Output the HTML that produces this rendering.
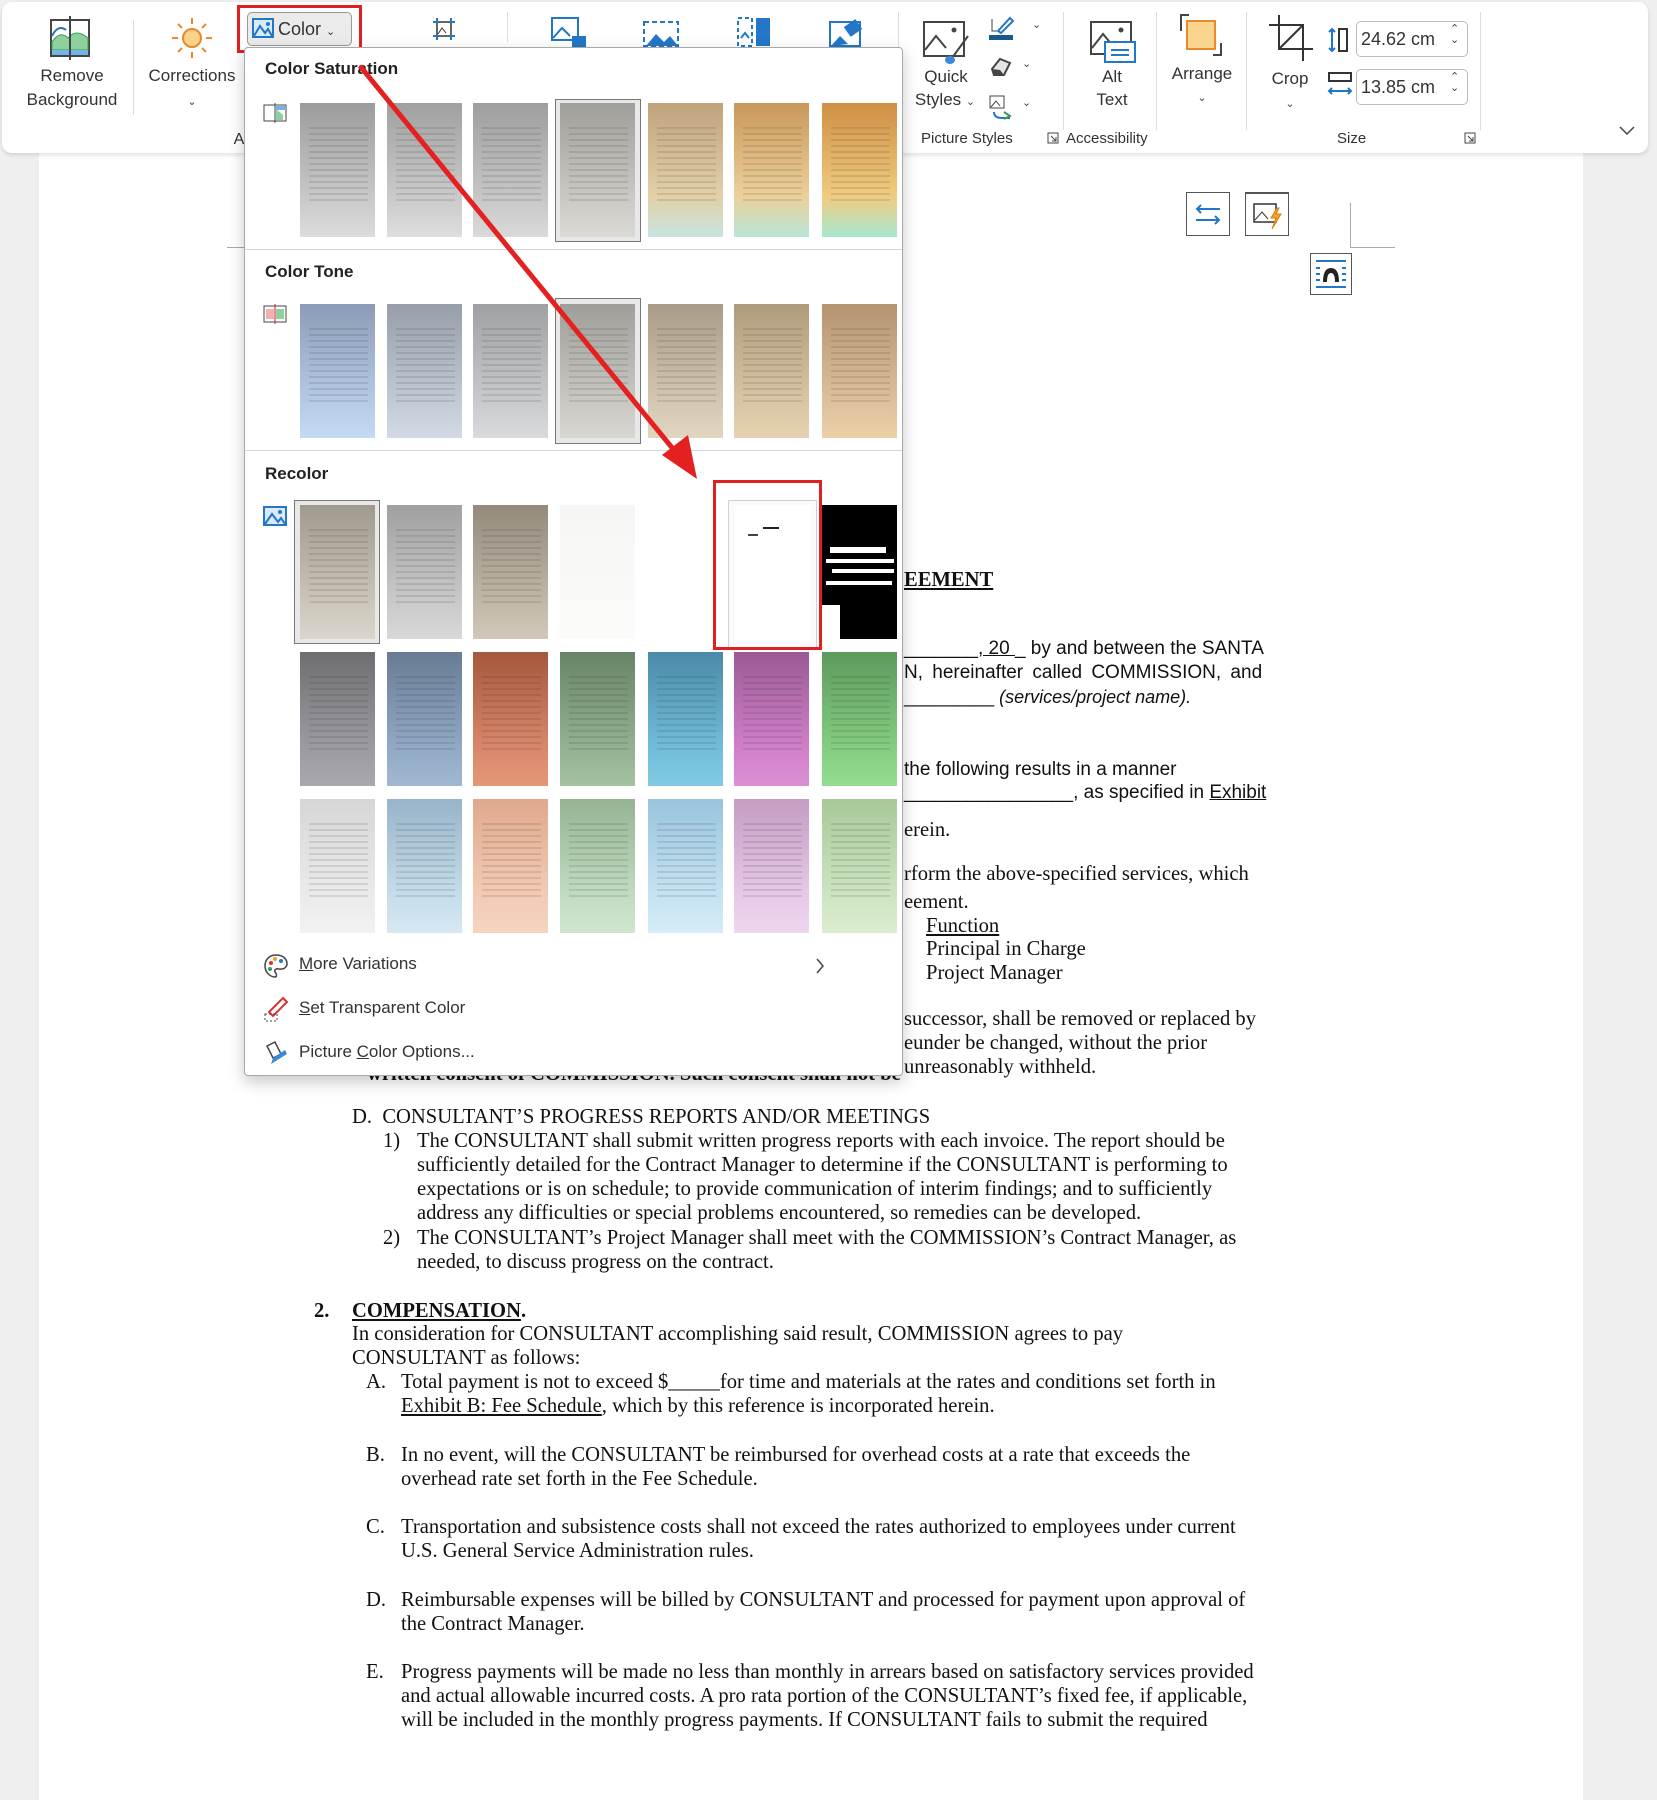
<!DOCTYPE html>
<html><head><meta charset="utf-8"><style>
*{margin:0;padding:0;box-sizing:border-box}
body{width:1657px;height:1739px;background:#efefef;position:relative;overflow:hidden;font-family:"Liberation Sans",sans-serif;color:#222}
.abs{position:absolute}
#page{left:39px;top:100px;width:1544px;height:1700px;background:#fff}
#ribbon{left:2px;top:2px;width:1646px;height:151px;background:#fff;border-radius:10px;box-shadow:0 2px 4px rgba(0,0,0,.12)}
.lbl{position:absolute;font-size:17px;color:#333;text-align:center;white-space:nowrap;line-height:20px}
.sep{position:absolute;width:1px;background:#ddd}
.chev{font-size:11px;color:#444}
.doc{position:absolute;font-family:"Liberation Serif",serif;font-size:20.6px;color:#111;white-space:nowrap;line-height:24px}
.docs{position:absolute;font-family:"Liberation Sans",sans-serif;font-size:19px;color:#111;white-space:nowrap;line-height:24px}
#panel{left:244px;top:47px;width:659px;height:1029px;background:#fff;border:1px solid #a9a9a9;border-radius:4px;box-shadow:0 6px 16px rgba(0,0,0,.22);z-index:5}
.hd{position:absolute;left:20px;font-size:17px;font-weight:bold;color:#222}
.hr{position:absolute;left:0;right:0;height:1px;background:#d6d6d6}
.t{position:absolute;width:75px;height:134px;overflow:hidden}
.t::after{content:"";position:absolute;left:9px;right:7px;top:24px;bottom:32px;background:repeating-linear-gradient(to bottom,rgba(40,40,40,.12) 0 2px,transparent 2px 6px)}
.t.nol::after{display:none}
.sel{position:absolute;border:1px solid #777;background:#e8e8e8}
.mi{position:absolute;left:54px;font-size:17px;color:#333}
.mi u{text-decoration:underline}
.box{position:absolute;border:1px solid #bbb;border-radius:5px;background:#fff;font-size:18px;color:#333;padding:7px 0 0 4px}
</style></head><body>
<div id="page" class="abs"></div>

<div id="ribbon" class="abs">
  <svg class="abs" style="left:46px;top:14px" width="44" height="44" viewBox="0 0 44 44"><rect x="3" y="4" width="38" height="36" fill="#fff" stroke="#444" stroke-width="2"/><path d="M4 26 Q12 14 20 22 Q28 12 40 22 L40 34 L4 34Z" fill="#8fd19e" stroke="#3a9a55"/><rect x="4" y="34" width="36" height="5" fill="#6fb5e8"/><path d="M4 20 Q10 8 18 14" fill="none" stroke="#2b6fb0" stroke-width="2"/><line x1="22" y1="0" x2="22" y2="44" stroke="#444" stroke-width="2"/></svg>
  <div class="lbl" style="left:20px;top:64px;width:100px">Remove</div>
  <div class="lbl" style="left:10px;top:88px;width:120px">Background</div>
  <div class="sep" style="left:131px;top:18px;height:95px"></div>
  <svg class="abs" style="left:168px;top:14px" width="44" height="44" viewBox="0 0 44 44"><circle cx="22" cy="22" r="9" fill="#fbd28a" stroke="#e8892a" stroke-width="2"/><g stroke="#e8892a" stroke-width="2"><line x1="22" y1="2" x2="22" y2="8"/><line x1="22" y1="36" x2="22" y2="42"/><line x1="2" y1="22" x2="8" y2="22"/><line x1="36" y1="22" x2="42" y2="22"/><line x1="8" y1="8" x2="12" y2="12"/><line x1="32" y1="32" x2="36" y2="36"/><line x1="8" y1="36" x2="12" y2="32"/><line x1="32" y1="12" x2="36" y2="8"/></g></svg>
  <div class="lbl" style="left:140px;top:64px;width:100px">Corrections</div>
  <div class="lbl chev" style="left:140px;top:90px;width:100px">&#8964;</div>
  <div class="lbl" style="left:230px;top:128px;width:14px;font-size:16px">A</div>
  <div class="abs" style="left:245px;top:10px;width:105px;height:34px;background:#ebebeb;border:1px solid #999;border-radius:5px"></div>
  <svg class="abs" style="left:250px;top:16px" width="22" height="20" viewBox="0 0 22 20"><rect x="1" y="1" width="20" height="18" fill="#dbeaf8" stroke="#2277c6" stroke-width="2"/><path d="M2 18 L8 8 L13 15 L16 11 L20 18" fill="none" stroke="#2277c6" stroke-width="2"/><circle cx="16" cy="6" r="2" fill="#2277c6"/></svg>
  <div class="lbl" style="left:276px;top:17px;font-size:18px">Color <span style="font-size:11px">&#8964;</span></div>
  <div class="abs" style="left:235px;top:3px;width:125px;height:48px;border:3px solid #e02020"></div>
  <svg class="abs" style="left:430px;top:15px" width="24" height="24" viewBox="0 0 24 24"><rect x="5" y="5" width="14" height="14" fill="none" stroke="#333" stroke-width="1.5"/><path d="M6 17 L10 11 L14 16" fill="none" stroke="#333"/><g stroke="#2277c6" stroke-width="2" fill="none"><path d="M1 5H5V1M19 1V5H23M23 19H19V23M5 23V19H1"/></g></svg>
  <div class="sep" style="left:505px;top:10px;height:30px"></div>
  <svg class="abs" style="left:548px;top:14px" width="38" height="32" viewBox="0 0 38 32"><rect x="2" y="2" width="26" height="22" fill="#fff" stroke="#2277c6" stroke-width="2"/><path d="M3 22 L12 12 L20 20" fill="none" stroke="#2277c6" stroke-width="2"/><rect x="22" y="20" width="14" height="12" fill="#2277c6"/></svg>
  <svg class="abs" style="left:640px;top:18px" width="38" height="28" viewBox="0 0 38 28"><rect x="2" y="2" width="34" height="24" fill="none" stroke="#2277c6" stroke-width="2" stroke-dasharray="5 3"/><path d="M4 26 L14 14 L22 22 L28 16 L36 26Z" fill="#2277c6"/></svg>
  <svg class="abs" style="left:734px;top:14px" width="38" height="32" viewBox="0 0 38 32"><rect x="2" y="2" width="14" height="28" fill="none" stroke="#2277c6" stroke-width="2" stroke-dasharray="4 3"/><rect x="20" y="2" width="14" height="28" fill="#2277c6"/><path d="M5 22 L9 17 L13 22" fill="none" stroke="#2277c6" stroke-width="2"/></svg>
  <svg class="abs" style="left:826px;top:16px" width="38" height="30" viewBox="0 0 38 30"><rect x="2" y="4" width="30" height="24" fill="none" stroke="#2277c6" stroke-width="2"/><path d="M3 28 L12 18 L20 26" fill="#2277c6"/><rect x="18" y="4" width="14" height="12" fill="#2277c6" transform="rotate(-35 25 10)"/></svg>
  <div class="sep" style="left:896px;top:10px;height:118px"></div>
  <svg class="abs" style="left:920px;top:18px" width="48" height="46" viewBox="0 0 48 46"><rect x="2" y="2" width="40" height="34" fill="#fff" stroke="#444" stroke-width="2"/><path d="M3 30 L14 16 L24 28" fill="none" stroke="#444" stroke-width="2"/><circle cx="32" cy="10" r="2.5" fill="#444"/><path d="M46 16 L30 38" stroke="#444" stroke-width="2"/><ellipse cx="28" cy="40" rx="5" ry="4" fill="#3b8ad8"/></svg>
  <div class="lbl" style="left:910px;top:65px;width:68px">Quick</div>
  <div class="lbl" style="left:903px;top:88px;width:80px">Styles <span class="chev">&#8964;</span></div>
  <svg class="abs" style="left:986px;top:13px" width="26" height="26" viewBox="0 0 26 26"><path d="M4 4V16H12" fill="none" stroke="#444"/><path d="M10 16 L22 3 L25 6 L13 18Z" fill="#fff" stroke="#2277c6" stroke-width="2"/><rect x="1" y="20" width="24" height="5" fill="#1a5a88"/></svg>
  <div class="abs chev" style="left:1030px;top:16px">&#8964;</div>
  <svg class="abs" style="left:986px;top:55px" width="24" height="22" viewBox="0 0 24 22"><path d="M4 12 L12 2 L22 6 L16 18 L6 18Z" fill="#e5e5e5" stroke="#444" stroke-width="2"/><path d="M4 12 L6 18 L16 18 L12 13Z" fill="#444"/></svg>
  <div class="abs chev" style="left:1020px;top:55px">&#8964;</div>
  <svg class="abs" style="left:986px;top:92px" width="26" height="26" viewBox="0 0 26 26"><rect x="2" y="2" width="14" height="12" fill="none" stroke="#444"/><path d="M3 13 L8 7 L12 12" fill="none" stroke="#444"/><path d="M6 18 Q6 24 14 24 L22 24" fill="none" stroke="#2277c6" stroke-width="2"/><path d="M16 18 L22 22 L16 25" fill="none" stroke="#3a9a55" stroke-width="2"/></svg>
  <div class="abs chev" style="left:1020px;top:94px">&#8964;</div>
  <div class="lbl" style="left:919px;top:127px;font-size:15px">Picture Styles</div>
  <svg class="abs" style="left:1045px;top:130px" width="12" height="12" viewBox="0 0 12 12"><path d="M1 1H11V11H1Z M4 4 L9 9 M9 5 V9 H5" fill="none" stroke="#444"/></svg>
  <div class="sep" style="left:1061px;top:10px;height:118px"></div>
  <svg class="abs" style="left:1087px;top:18px" width="48" height="44" viewBox="0 0 48 44"><rect x="2" y="2" width="40" height="32" fill="#fff" stroke="#444" stroke-width="2"/><path d="M3 28 L14 14 L24 26" fill="none" stroke="#444" stroke-width="2"/><circle cx="32" cy="10" r="2.5" fill="#444"/><rect x="16" y="22" width="30" height="20" fill="#fff" stroke="#2277c6" stroke-width="2"/><path d="M22 30H40M22 35H40" stroke="#2277c6" stroke-width="2"/></svg>
  <div class="lbl" style="left:1080px;top:65px;width:60px">Alt</div>
  <div class="lbl" style="left:1080px;top:88px;width:60px">Text</div>
  <div class="lbl" style="left:1064px;top:127px;font-size:15px">Accessibility</div>
  <div class="sep" style="left:1154px;top:10px;height:118px"></div>
  <svg class="abs" style="left:1177px;top:11px" width="44" height="44" viewBox="0 0 44 44"><path d="M2 18V2H10" fill="none" stroke="#444" stroke-width="2"/><rect x="8" y="8" width="28" height="28" fill="#f9d48e" stroke="#e8892a" stroke-width="2"/><path d="M34 42H42V30" fill="none" stroke="#444" stroke-width="2"/></svg>
  <div class="lbl" style="left:1160px;top:62px;width:80px">Arrange</div>
  <div class="lbl chev" style="left:1160px;top:86px;width:80px">&#8964;</div>
  <div class="sep" style="left:1244px;top:10px;height:118px"></div>
  <svg class="abs" style="left:1267px;top:13px" width="44" height="46" viewBox="0 0 44 46"><path d="M10 0V34H44 M0 10H34V46" fill="none" stroke="#333" stroke-width="2"/><path d="M10 34 L34 10" stroke="#333" stroke-width="2"/></svg>
  <div class="lbl" style="left:1260px;top:67px;width:56px">Crop</div>
  <div class="lbl chev" style="left:1260px;top:92px;width:56px">&#8964;</div>
  <svg class="abs" style="left:1325px;top:25px" width="24" height="26" viewBox="0 0 24 26"><path d="M5 2V24 M2 5L5 2L8 5 M2 21L5 24L8 21" fill="none" stroke="#2277c6" stroke-width="2"/><rect x="12" y="2" width="8" height="22" fill="none" stroke="#333" stroke-width="2"/></svg>
  <div class="box" style="left:1354px;top:19px;width:112px;height:36px">24.62 cm</div>
  <div class="abs chev" style="left:1448px;top:22px;line-height:11px">&#8963;<br>&#8964;</div>
  <svg class="abs" style="left:1325px;top:69px" width="26" height="26" viewBox="0 0 26 26"><rect x="2" y="2" width="22" height="8" fill="none" stroke="#333" stroke-width="2"/><path d="M2 20H24 M5 17L2 20L5 23 M21 17L24 20L21 23" fill="none" stroke="#2277c6" stroke-width="2"/></svg>
  <div class="box" style="left:1354px;top:67px;width:112px;height:36px">13.85 cm</div>
  <div class="abs chev" style="left:1448px;top:70px;line-height:11px">&#8963;<br>&#8964;</div>
  <div class="lbl" style="left:1335px;top:127px;font-size:15px">Size</div>
  <svg class="abs" style="left:1462px;top:130px" width="12" height="12" viewBox="0 0 12 12"><path d="M1 1H11V11H1Z M4 4 L9 9 M9 5 V9 H5" fill="none" stroke="#444"/></svg>
  <div class="sep" style="left:1478px;top:10px;height:118px"></div>
  <svg class="abs" style="left:1617px;top:124px" width="16" height="10" viewBox="0 0 16 10"><path d="M1 1L8 8L15 1" fill="none" stroke="#444" stroke-width="1.5"/></svg>
</div>

<div class="abs" style="left:1186px;top:192px;width:44px;height:44px;border:1px solid #555;background:#fff"></div>
<svg class="abs" style="left:1194px;top:204px" width="28" height="22" viewBox="0 0 28 22"><path d="M26 5H3 M7 1L3 5L7 9 M2 16H25 M21 12L25 16L21 20" fill="none" stroke="#2277c6" stroke-width="2"/></svg>
<div class="abs" style="left:1245px;top:192px;width:44px;height:44px;border:1px solid #555;border-top-width:2px;background:#fff"></div>
<svg class="abs" style="left:1253px;top:202px" width="30" height="28" viewBox="0 0 30 28"><rect x="1" y="2" width="22" height="18" fill="none" stroke="#333" stroke-width="1.5"/><path d="M2 18 L9 10 L15 17" fill="none" stroke="#333"/><path d="M24 6 L18 16 H23 L19 27 L28 12 H23 L26 6Z" fill="#f6a52c" stroke="#d97a0a"/></svg>
<div class="abs" style="left:1350px;top:203px;width:1px;height:45px;background:#aaa"></div>
<div class="abs" style="left:1350px;top:247px;width:45px;height:1px;background:#aaa"></div>
<div class="abs" style="left:227px;top:247px;width:20px;height:1px;background:#aaa"></div>
<div class="abs" style="left:1310px;top:253px;width:42px;height:42px;border:1px solid #555;background:#fff"></div>
<svg class="abs" style="left:1314px;top:259px" width="34" height="30" viewBox="0 0 34 30"><path d="M2 2H32 M2 28H32" stroke="#2277c6" stroke-width="2"/><path d="M2 9H6M2 15H6M2 21H6M28 9H32M28 15H32M28 21H32" stroke="#2277c6" stroke-width="2"/><path d="M9 23 Q9 9 17 9 Q25 9 25 23 H21 Q21 14 17 14 Q13 14 13 23Z" fill="#222"/></svg>

<div class="doc" style="left:904px;top:568px;font-weight:bold;text-decoration:underline">EEMENT</div>
<div class="docs" style="left:904px;top:637px">_______<u>, 20 </u>_ by and between the SANTA</div>
<div class="docs" style="left:904px;top:661px;word-spacing:4px">N, hereinafter called COMMISSION, and</div>
<div class="docs" style="left:904px;top:685px;font-size:18px">_________ <i>(services/project name).</i></div>
<div class="docs" style="left:904px;top:758px">the following results in a manner</div>
<div class="docs" style="left:904px;top:781px">________________, as specified in <u>Exhibit</u></div>
<div class="doc" style="left:904px;top:818px">erein.</div>
<div class="doc" style="left:904px;top:862px">rform the above-specified services, which</div>
<div class="doc" style="left:904px;top:890px">eement.</div>
<div class="doc" style="left:926px;top:914px"><u>Function</u></div>
<div class="doc" style="left:926px;top:937px">Principal in Charge</div>
<div class="doc" style="left:926px;top:961px">Project Manager</div>
<div class="doc" style="left:904px;top:1007px">successor, shall be removed or replaced by</div>
<div class="doc" style="left:904px;top:1031px">eunder be changed, without the prior</div>
<div class="doc" style="left:904px;top:1055px">unreasonably withheld.</div>
<div class="doc" style="left:367px;top:1062px;font-weight:bold">written consent of COMMISSION. Such consent shall not be</div>
<div class="doc" style="left:352px;top:1105px">D.&nbsp; CONSULTANT’S PROGRESS REPORTS AND/OR MEETINGS</div>
<div class="doc" style="left:383px;top:1129px">1)</div>
<div class="doc" style="left:417px;top:1129px">The CONSULTANT shall submit written progress reports with each invoice. The report should be</div>
<div class="doc" style="left:417px;top:1153px">sufficiently detailed for the Contract Manager to determine if the CONSULTANT is performing to</div>
<div class="doc" style="left:417px;top:1177px">expectations or is on schedule; to provide communication of interim findings; and to sufficiently</div>
<div class="doc" style="left:417px;top:1201px">address any difficulties or special problems encountered, so remedies can be developed.</div>
<div class="doc" style="left:383px;top:1226px">2)</div>
<div class="doc" style="left:417px;top:1226px">The CONSULTANT’s Project Manager shall meet with the COMMISSION’s Contract Manager, as</div>
<div class="doc" style="left:417px;top:1250px">needed, to discuss progress on the contract.</div>
<div class="doc" style="left:314px;top:1299px;font-weight:bold">2.</div>
<div class="doc" style="left:352px;top:1299px;font-weight:bold"><u>COMPENSATION</u>.</div>
<div class="doc" style="left:352px;top:1322px">In consideration for CONSULTANT accomplishing said result, COMMISSION agrees to pay</div>
<div class="doc" style="left:352px;top:1346px">CONSULTANT as follows:</div>
<div class="doc" style="left:366px;top:1370px">A.</div>
<div class="doc" style="left:401px;top:1370px">Total payment is not to exceed $_____for time and materials at the rates and conditions set forth in</div>
<div class="doc" style="left:401px;top:1394px"><u>Exhibit B: Fee Schedule</u>, which by this reference is incorporated herein.</div>
<div class="doc" style="left:366px;top:1443px">B.</div>
<div class="doc" style="left:401px;top:1443px">In no event, will the CONSULTANT be reimbursed for overhead costs at a rate that exceeds the</div>
<div class="doc" style="left:401px;top:1467px">overhead rate set forth in the Fee Schedule.</div>
<div class="doc" style="left:366px;top:1515px">C.</div>
<div class="doc" style="left:401px;top:1515px">Transportation and subsistence costs shall not exceed the rates authorized to employees under current</div>
<div class="doc" style="left:401px;top:1539px">U.S. General Service Administration rules.</div>
<div class="doc" style="left:366px;top:1588px">D.</div>
<div class="doc" style="left:401px;top:1588px">Reimbursable expenses will be billed by CONSULTANT and processed for payment upon approval of</div>
<div class="doc" style="left:401px;top:1612px">the Contract Manager.</div>
<div class="doc" style="left:366px;top:1660px">E.</div>
<div class="doc" style="left:401px;top:1660px">Progress payments will be made no less than monthly in arrears based on satisfactory services provided</div>
<div class="doc" style="left:401px;top:1684px">and actual allowable incurred costs. A pro rata portion of the CONSULTANT’s fixed fee, if applicable,</div>
<div class="doc" style="left:401px;top:1708px">will be included in the monthly progress payments. If CONSULTANT fails to submit the required</div>

<div id="panel" class="abs">
  <div class="hd" style="top:11px">Color Saturation</div>
  <svg class="abs" style="left:18px;top:55px" width="24" height="20" viewBox="0 0 24 20"><rect x="1" y="2" width="22" height="16" fill="#fff" stroke="#444"/><path d="M13 6 L20 12 V17 H13Z" fill="#8fd19e"/><rect x="13" y="3" width="9" height="4" fill="#6fb5e8"/><line x1="12" y1="0" x2="12" y2="20" stroke="#444"/></svg>
  <div class="hr" style="top:201px"></div>
  <div class="hd" style="top:214px">Color Tone</div>
  <svg class="abs" style="left:18px;top:256px" width="24" height="20" viewBox="0 0 24 20"><rect x="1" y="2" width="22" height="16" fill="#fff" stroke="#444"/><rect x="3" y="5" width="8" height="10" fill="#f3b0b0"/><rect x="13" y="5" width="8" height="10" fill="#8fd19e"/><line x1="12" y1="0" x2="12" y2="20" stroke="#c22"/></svg>
  <div class="hr" style="top:402px"></div>
  <div class="hd" style="top:416px">Recolor</div>
  <svg class="abs" style="left:18px;top:458px" width="24" height="20" viewBox="0 0 24 20"><rect x="1" y="1" width="22" height="18" fill="#dbeaf8" stroke="#2277c6" stroke-width="2"/><path d="M2 18 L9 8 L15 16 L18 12 L22 18" fill="none" stroke="#2277c6" stroke-width="2"/><circle cx="17" cy="6" r="2" fill="#2277c6"/></svg>

  <div class="sel" style="left:310px;top:51px;width:86px;height:143px"></div>
  <div class="sel" style="left:310px;top:250px;width:86px;height:146px"></div>
  <div class="sel" style="left:49px;top:452px;width:86px;height:144px"></div>

  <div class="t" style="left:55px;top:55px;background:linear-gradient(#9c9c9c,#c8c8c8 70%,#dcdcdc)"></div>
  <div class="t" style="left:142px;top:55px;background:linear-gradient(#a0a0a0,#cacaca 70%,#dedede)"></div>
  <div class="t" style="left:228px;top:55px;background:linear-gradient(#9e9e9e,#c6c6c6 70%,#dadada)"></div>
  <div class="t" style="left:315px;top:55px;background:linear-gradient(#a09e9a,#cac8c2 70%,#dcdad4)"></div>
  <div class="t" style="left:403px;top:55px;background:linear-gradient(#c0a37c,#e3d0a8 70%,#c8e4e0)"></div>
  <div class="t" style="left:489px;top:55px;background:linear-gradient(#c9985a,#ecd09a 70%,#b8e6d8)"></div>
  <div class="t" style="left:577px;top:55px;background:linear-gradient(#cf8f44,#f0cc80 70%,#a8e8d0)"></div>
  <div class="t" style="left:55px;top:256px;background:linear-gradient(#8c9cb6,#b4c8e4 70%,#c4daf4)"></div>
  <div class="t" style="left:142px;top:256px;background:linear-gradient(#979eaa,#c0c8d4 70%,#d2dae6)"></div>
  <div class="t" style="left:228px;top:256px;background:linear-gradient(#9ea0a4,#c6c8cc 70%,#d8dadc)"></div>
  <div class="t" style="left:315px;top:256px;background:linear-gradient(#a09e9a,#c8c6c0 70%,#d8d6d0)"></div>
  <div class="t" style="left:403px;top:256px;background:linear-gradient(#a89c88,#d2c6b0 70%,#e2d6c0)"></div>
  <div class="t" style="left:489px;top:256px;background:linear-gradient(#b09a7c,#d8c4a4 70%,#e6d2b0)"></div>
  <div class="t" style="left:577px;top:256px;background:linear-gradient(#b49470,#dcbf98 70%,#ecd0a8)"></div>
  <div class="t" style="left:55px;top:457px;background:linear-gradient(#a09a8e,#cac4b8 70%,#dad6cc)"></div>
  <div class="t" style="left:142px;top:457px;background:linear-gradient(#a0a0a0,#c8c8c8 70%,#d8d8d8)"></div>
  <div class="t" style="left:228px;top:457px;background:linear-gradient(#948a7c,#c0b6a6 70%,#d0c8ba)"></div>
  <div class="t nol" style="left:315px;top:457px;background:linear-gradient(#f6f6f4,#fbfbfa)"></div>
  <div class="abs" style="left:483px;top:452px;width:89px;height:148px;border:1px solid #d0d0d0;background:#fafafa"></div>
  <div class="abs" style="left:490px;top:457px;width:75px;height:137px;background:#fff"></div>
  <div class="abs" style="left:518px;top:479px;width:16px;height:2px;background:#222"></div>
  <div class="abs" style="left:503px;top:486px;width:10px;height:2px;background:#444"></div>
  <div class="t nol" style="left:577px;top:457px;background:#000">
    <div class="abs" style="left:8px;top:42px;width:56px;height:6px;background:#fff"></div>
    <div class="abs" style="left:4px;top:54px;width:68px;height:4px;background:#fff"></div>
    <div class="abs" style="left:10px;top:64px;width:62px;height:4px;background:#fff"></div>
    <div class="abs" style="left:4px;top:76px;width:66px;height:4px;background:#fff"></div>
    <div class="abs" style="left:0;top:100px;width:18px;height:34px;background:#fff"></div>
  </div>
  <div class="abs" style="left:468px;top:432px;width:109px;height:170px;border:3px solid #e02020"></div>
  <div class="t" style="left:55px;top:604px;background:linear-gradient(#6e6e72,#9a9aa0 70%,#a8a8ae)"></div>
  <div class="t" style="left:142px;top:604px;background:linear-gradient(#687c94,#90a8c4 70%,#a2b8d2)"></div>
  <div class="t" style="left:228px;top:604px;background:linear-gradient(#a4583c,#d8866a 70%,#e49878)"></div>
  <div class="t" style="left:315px;top:604px;background:linear-gradient(#688468,#92b092 70%,#a2c2a0)"></div>
  <div class="t" style="left:403px;top:604px;background:linear-gradient(#4a8aa8,#70bcd8 70%,#80cae4)"></div>
  <div class="t" style="left:489px;top:604px;background:linear-gradient(#9a5a94,#d07ec8 70%,#dc90d4)"></div>
  <div class="t" style="left:577px;top:604px;background:linear-gradient(#5c9a5c,#84cc80 70%,#94dc8e)"></div>
  <div class="t" style="left:55px;top:751px;background:linear-gradient(#d6d6d6,#eaeaea 70%,#f2f2f2)"></div>
  <div class="t" style="left:142px;top:751px;background:linear-gradient(#98b4c8,#c4dcea 70%,#d6e8f2)"></div>
  <div class="t" style="left:228px;top:751px;background:linear-gradient(#e0a88c,#f2cab4 70%,#f4d4c0)"></div>
  <div class="t" style="left:315px;top:751px;background:linear-gradient(#94b494,#c0dac0 70%,#d0e6ce)"></div>
  <div class="t" style="left:403px;top:751px;background:linear-gradient(#98c4dc,#c4e2f2 70%,#d4ecf6)"></div>
  <div class="t" style="left:489px;top:751px;background:linear-gradient(#c49cc4,#e6c8e6 70%,#eed6ee)"></div>
  <div class="t" style="left:577px;top:751px;background:linear-gradient(#a8c898,#cce4c0 70%,#dcecd0)"></div>

  <svg class="abs" style="left:18px;top:905px" width="26" height="26" viewBox="0 0 26 26"><path d="M13 2 C5 2 2 8 2 13 C2 20 8 24 12 24 C14 24 14 21 12 19 C11 17 13 15 16 16 C22 17 24 13 24 11 C24 5 19 2 13 2Z" fill="#fff" stroke="#444" stroke-width="1.5"/><circle cx="8" cy="10" r="2" fill="#e03030"/><circle cx="12" cy="6" r="2" fill="#f0a020"/><circle cx="18" cy="8" r="2" fill="#2277c6"/><circle cx="7" cy="16" r="2" fill="#3a9a55"/></svg>
  <div class="mi" style="top:906px"><u>M</u>ore Variations</div>
  <svg class="abs" style="left:570px;top:910px" width="10" height="16" viewBox="0 0 10 16"><path d="M2 1L8 8L2 15" fill="none" stroke="#444" stroke-width="1.5"/></svg>
  <svg class="abs" style="left:18px;top:948px" width="26" height="26" viewBox="0 0 26 26"><path d="M20 2 L24 6 L10 20 L6 16Z" fill="#fff" stroke="#e03030" stroke-width="2"/><rect x="2" y="18" width="12" height="7" fill="none" stroke="#444" stroke-dasharray="2 2"/></svg>
  <div class="mi" style="top:950px"><u>S</u>et Transparent Color</div>
  <svg class="abs" style="left:18px;top:992px" width="26" height="26" viewBox="0 0 26 26"><path d="M4 6 L12 2 L18 14 L10 18Z" fill="#fff" stroke="#444" stroke-width="1.5"/><path d="M10 18 L22 10 L24 14 L8 24Z" fill="#3b8ad8"/></svg>
  <div class="mi" style="top:994px">Picture <u>C</u>olor Options...</div>
</div>

<svg class="abs" style="left:0;top:0;z-index:6" width="1657" height="600" viewBox="0 0 1657 600"><line x1="360" y1="66" x2="678" y2="455" stroke="#e52020" stroke-width="5"/><path d="M697 479 L662 455 L688 435Z" fill="#e52020"/></svg>
</body></html>
